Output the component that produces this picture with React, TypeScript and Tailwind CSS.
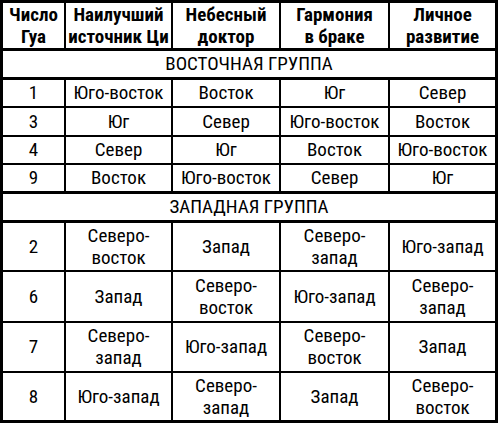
const east = [
  ["1", "Юго-восток", "Восток", "Юг", "Север"],
  ["3", "Юг", "Север", "Юго-восток", "Восток"],
  ["4", "Север", "Юг", "Восток", "Юго-восток"],
  ["9", "Восток", "Юго-восток", "Север", "Юг"],
];

const west = [
  ["2", "Северо-\nвосток", "Запад", "Северо-\nзапад", "Юго-запад"],
  ["6", "Запад", "Северо-\nвосток", "Юго-запад", "Северо-\nзапад"],
  ["7", "Северо-\nзапад", "Юго-запад", "Северо-\nвосток", "Запад"],
  ["8", "Юго-запад", "Северо-\nзапад", "Запад", "Северо-\nвосток"],
];

const heads = ["Число\nГуа", "Наилучший\nисточник Ци", "Небесный\nдоктор", "Гармония\nв браке", "Личное\nразвитие"];

function Cell({ text, last, bottom, bold }: { text: string; last: boolean; bottom: string; bold?: boolean }) {
  return (
    <div
      className={`flex items-center justify-center text-center whitespace-pre-line border-black ${last ? "" : "border-r-2"} ${bottom} ${bold ? "font-bold" : ""}`}
    >
      {text}
    </div>
  );
}

function Row({ cells, bottom, bold }: { cells: string[]; bottom: string; bold?: boolean }) {
  return (
    <>
      {cells.map((c, i) => (
        <Cell key={i} text={c} last={i === 4} bottom={bottom} bold={bold} />
      ))}
    </>
  );
}

export default function App() {
  return (
    <div
      className="bg-white w-[498px] h-[423px] border-[3px] border-black text-black text-[19px] leading-[22px] grid grid-cols-[63px_107px_108px_109px_105px] grid-rows-[48px_29px_28px_29px_28px_29px_29px_49px_51px_50px_47px]"
      style={{ fontFamily: '"Liberation Sans Narrow", "Roboto Condensed", "Arial Narrow", "Liberation Sans", sans-serif' }}
    >
      <Row cells={heads} bottom="border-b-[3px]" bold />
      <div className="col-span-5 flex items-center justify-center border-b-[3px] border-black">ВОСТОЧНАЯ ГРУППА</div>
      {east.map((r, i) => (
        <Row key={r[0]} cells={r} bottom={i === 3 ? "border-b-[3px]" : "border-b-2"} />
      ))}
      <div className="col-span-5 flex items-center justify-center border-b-[3px] border-black">ЗАПАДНАЯ ГРУППА</div>
      {west.map((r, i) => (
        <Row key={r[0]} cells={r} bottom={i === 3 ? "" : "border-b-2"} />
      ))}
    </div>
  );
}
